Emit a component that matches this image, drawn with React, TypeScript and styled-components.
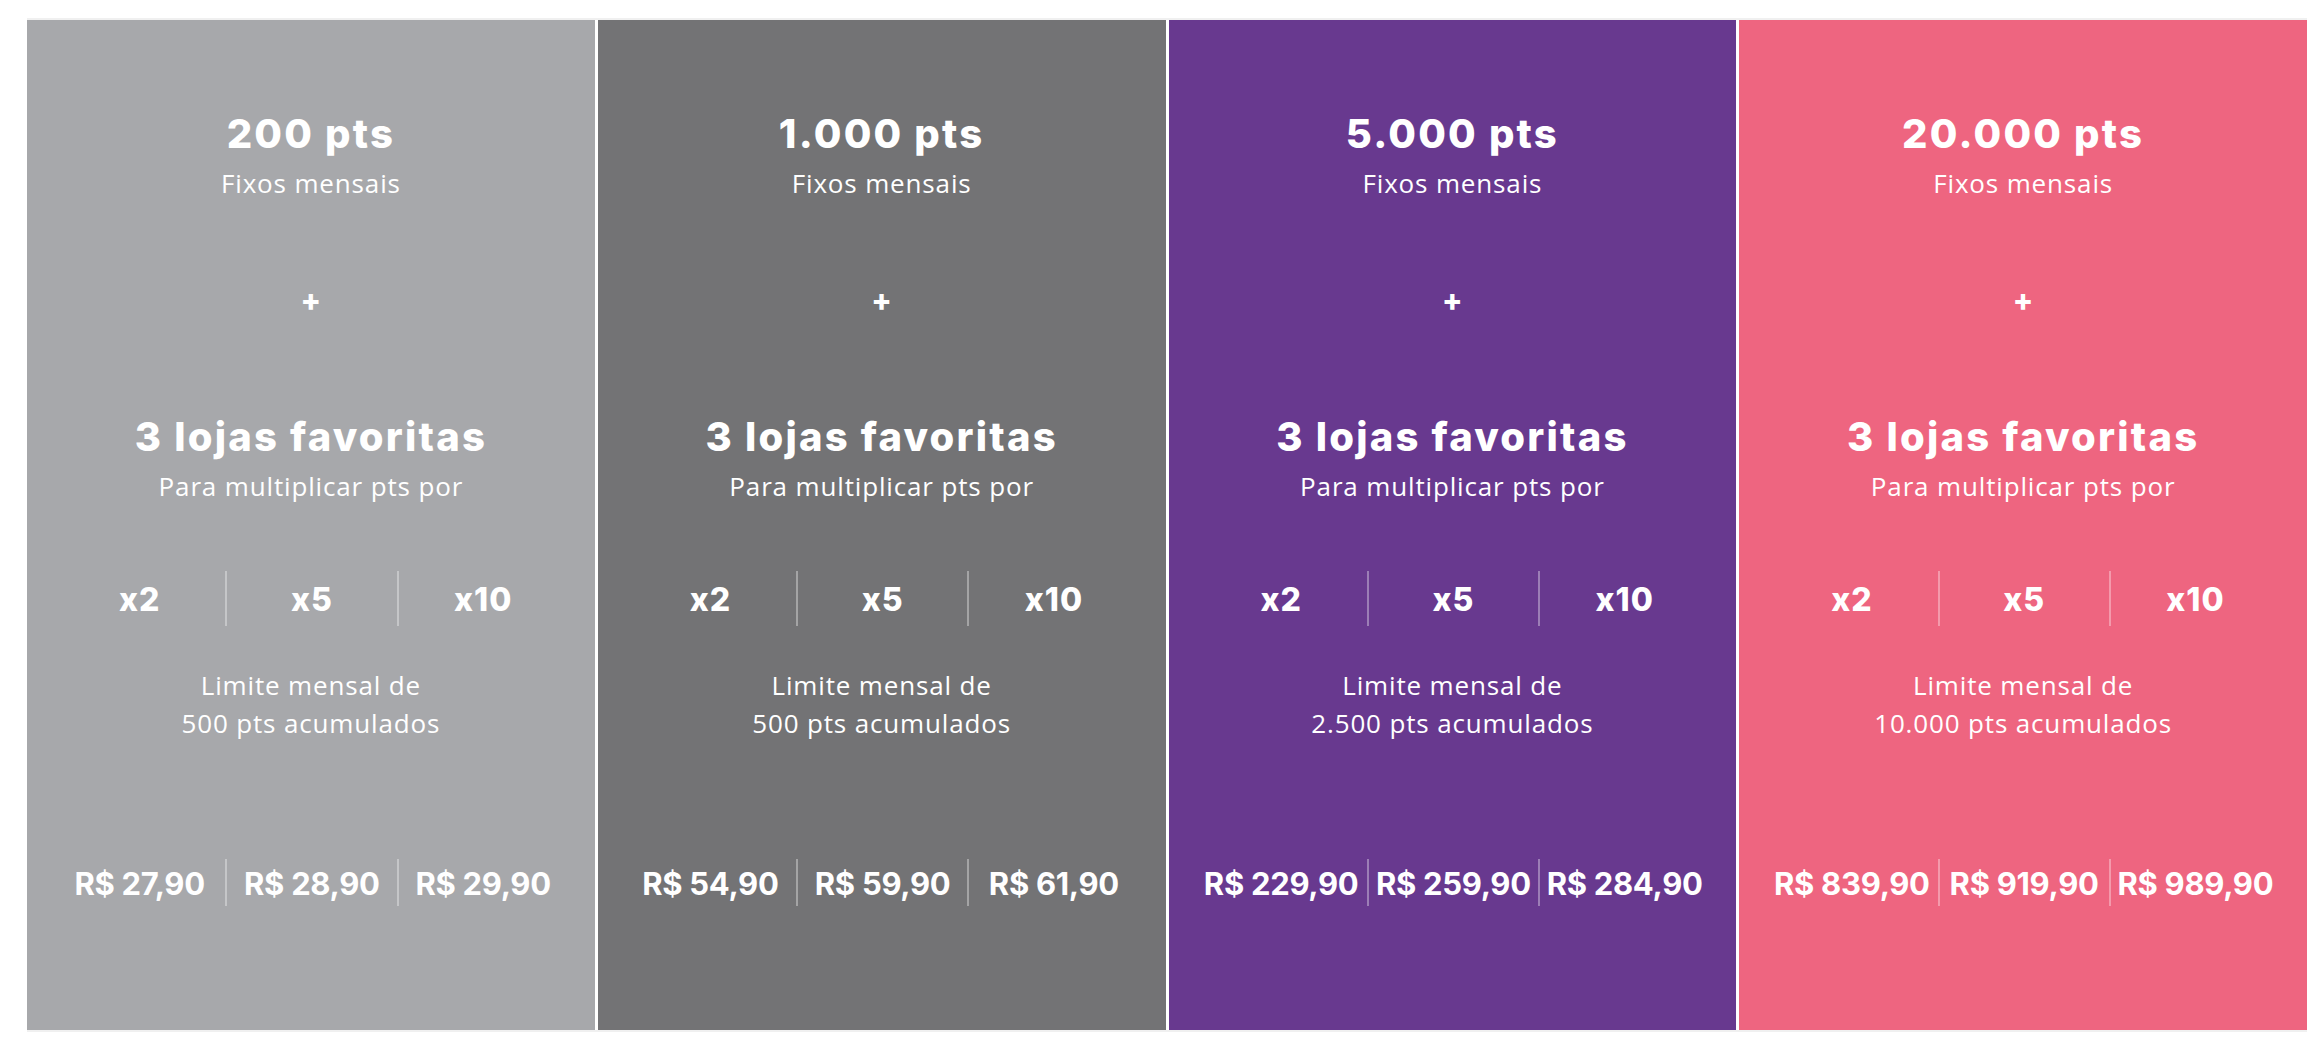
import * as React from 'react';
import styled, { createGlobalStyle } from 'styled-components';

interface Plan {
	points: string;
	limit: string;
	color: string;
	prices: string[];
}

const plans: Plan[] = [
	{ points: '200 pts', limit: '500 pts acumulados', color: '#a7a8ab', prices: ['R$ 27,90', 'R$ 28,90', 'R$ 29,90'] },
	{ points: '1.000 pts', limit: '500 pts acumulados', color: '#737375', prices: ['R$ 54,90', 'R$ 59,90', 'R$ 61,90'] },
	{ points: '5.000 pts', limit: '2.500 pts acumulados', color: '#68398f', prices: ['R$ 229,90', 'R$ 259,90', 'R$ 284,90'] },
	{ points: '20.000 pts', limit: '10.000 pts acumulados', color: '#ee6580', prices: ['R$ 839,90', 'R$ 919,90', 'R$ 989,90'] }
];

const multipliers = ['x2', 'x5', 'x10'];

const GlobalStyle = createGlobalStyle`
	body {
		margin: 0;
		background: #ffffff;
		font-family: 'Open Sans', 'Noto Sans', sans-serif;
	}
`;

const StyledPage = styled.div`
	padding: 18px 16px 0 27px;
`;

const StyledGrid = styled.div`
	display: grid;
	grid-template-columns: repeat(4, 1fr);
	gap: 3px;
	border-top: 2px solid #f0f0f0;
	border-bottom: 2px solid #f0f0f0;
`;

const StyledCard = styled.div<{ $color: string }>`
	display: flex;
	flex-direction: column;
	align-items: center;
	padding: 90px 27px 124px;
	background-color: ${props => props.$color};
	color: #ffffff;
	text-align: center;
`;

const StyledTitle = styled.div<{ $top?: number }>`
	margin-top: ${props => props.$top || 0}px;
	font-family: Inter, 'Liberation Sans', sans-serif;
	font-weight: 800;
	font-size: 40px;
	line-height: 48px;
	letter-spacing: 2.2px;
	white-space: nowrap;
`;

const StyledText = styled.div<{ $top?: number; $lineHeight?: number }>`
	margin-top: ${props => props.$top || 0}px;
	font-family: 'Open Sans', 'Noto Sans', sans-serif;
	font-weight: 400;
	font-size: 26px;
	line-height: ${props => props.$lineHeight || 36}px;
	letter-spacing: 0.85px;
	white-space: nowrap;
`;

const StyledPlus = styled.div`
	margin-top: 84px;
	height: 30px;
	font-family: Inter, 'Liberation Sans', sans-serif;
	font-weight: 800;
	font-size: 30px;
	line-height: 30px;
`;

const StyledSplitRow = styled.div<{ $top: number; $height: number }>`
	display: grid;
	grid-template-columns: repeat(3, 1fr);
	align-self: stretch;
	margin-top: ${props => props.$top}px;
	height: ${props => props.$height}px;
`;

const StyledCell = styled.div<{ $price?: boolean }>`
	display: flex;
	align-items: center;
	justify-content: center;
	font-family: Inter, 'Liberation Sans', sans-serif;
	font-weight: ${props => (props.$price ? 700 : 800)};
	font-size: ${props => (props.$price ? 31 : 32)}px;
	letter-spacing: ${props => (props.$price ? -0.3 : 1)}px;
	white-space: nowrap;
	padding-top: ${props => (props.$price ? 1 : 2)}px;

	& + & {
		border-left: 2px solid rgba(255, 255, 255, 0.35);
	}
`;

const PlanCard: React.FC<{ plan: Plan }> = ({ plan }) => (
	<StyledCard $color={plan.color}>
		<StyledTitle>{plan.points}</StyledTitle>
		<StyledText $top={7}>Fixos mensais</StyledText>
		<StyledPlus>+</StyledPlus>
		<StyledTitle $top={98}>3 lojas favoritas</StyledTitle>
		<StyledText $top={7}>Para multiplicar pts por</StyledText>
		<StyledSplitRow $top={67} $height={55}>
			{multipliers.map(m => (
				<StyledCell key={m}>{m}</StyledCell>
			))}
		</StyledSplitRow>
		<StyledText $top={40} $lineHeight={38}>
			Limite mensal de
			<br />
			{plan.limit}
		</StyledText>
		<StyledSplitRow $top={117} $height={47}>
			{plan.prices.map(p => (
				<StyledCell key={p} $price>
					{p}
				</StyledCell>
			))}
		</StyledSplitRow>
	</StyledCard>
);

export default function App() {
	return (
		<>
			<GlobalStyle />
			<StyledPage>
				<StyledGrid>
					{plans.map(plan => (
						<PlanCard key={plan.points} plan={plan} />
					))}
				</StyledGrid>
			</StyledPage>
		</>
	);
}
